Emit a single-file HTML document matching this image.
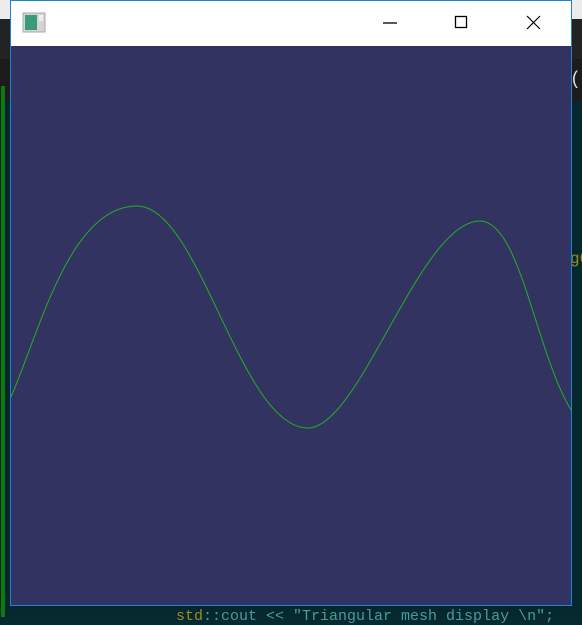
<!DOCTYPE html>
<html><head><style>
html,body{margin:0;padding:0;width:582px;height:617px;overflow:hidden;background:#052a30;font-family:"Liberation Sans",sans-serif}
.a{position:absolute}
</style></head><body>
<div class="a" style="left:0;top:0;width:582px;height:19px;background:#ececec"></div>
<div class="a" style="left:0;top:19px;width:582px;height:40px;background:#232323"></div>
<div class="a" style="left:0;top:59px;width:582px;height:42px;background:#1c1c1c"></div>
<div class="a" style="left:0;top:101px;width:582px;height:516px;background:#05282e"></div>
<div class="a" style="left:1px;top:86px;width:4px;height:531px;background:#0c7a0c"></div>
<div class="a" style="left:570px;top:70px;color:#ddd;font-size:18px;font-family:'Liberation Mono',monospace">(c</div>
<div class="a" style="left:570px;top:250px;color:#9a8a20;font-size:16px;font-family:'Liberation Mono',monospace">g0</div>
<div class="a" style="left:176px;top:608px;color:#4a9a9a;font-size:15px;font-family:'Liberation Mono',monospace;white-space:pre"><span style="color:#a08a20">std</span>::cout &lt;&lt; "Triangular mesh display \n";</div>
<div class="a" style="left:10px;top:0;width:560px;height:604px;border:1px solid #1883d7;background:#333362"></div>
<div class="a" style="left:11px;top:1px;width:560px;height:45px;background:#fff"></div>
<svg class="a" style="left:0;top:0" width="582" height="617">
<rect x="23" y="13" width="22" height="19" fill="#d4d4d4" stroke="#aaa"/>
<rect x="25" y="15" width="12" height="15" fill="#3a9a7a"/>
<rect x="39" y="15" width="4" height="6" fill="#eee"/>
<line x1="383" y1="23" x2="397" y2="23" stroke="#000" stroke-width="1.3"/>
<rect x="455.5" y="16.5" width="11" height="11" fill="none" stroke="#000" stroke-width="1.3"/>
<path d="M527 16 L540 29 M540 16 L527 29" stroke="#000" stroke-width="1.2"/>
<path d="M11 397 C40 330 70 206 137 206 C200 206 240 428 308 428 C360 428 420 221 480 221 C520 221 535 350 571 410" fill="none" stroke="#22b022" stroke-width="1"/>
</svg>
</body></html>
